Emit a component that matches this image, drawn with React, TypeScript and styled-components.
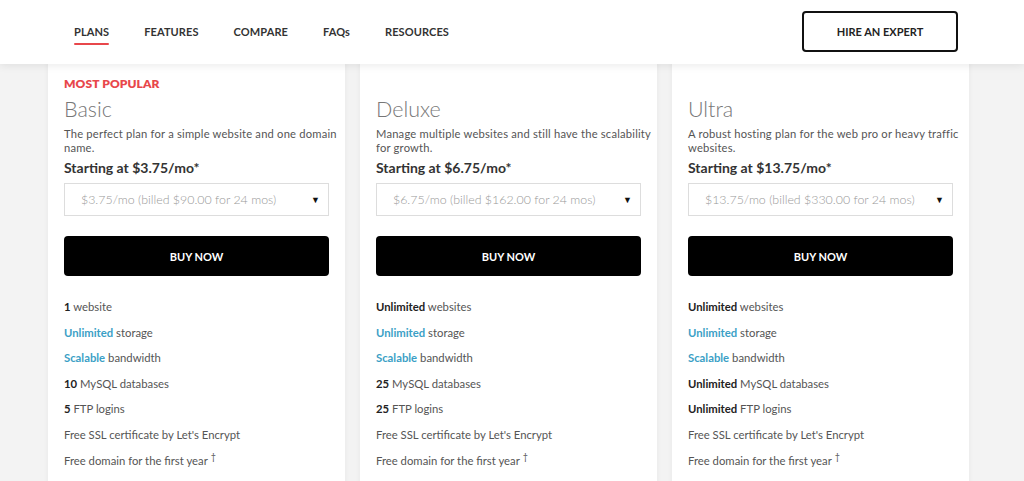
import React from 'react';
import styled, { createGlobalStyle } from 'styled-components';

const GlobalStyle = createGlobalStyle`
  html, body {
    margin: 0;
    padding: 0;
    background: #f3f3f3;
    font-family: Lato, "Open Sans", "Liberation Sans", sans-serif;
    overflow: hidden;
  }
  * { box-sizing: border-box; }
`;

const Page = styled.div`
  width: 1024px;
  height: 481px;
  overflow: hidden;
  position: relative;
`;

const Header = styled.header`
  position: relative;
  z-index: 2;
  height: 64px;
  background: #fff;
  box-shadow: 0 2px 8px rgba(0, 0, 0, 0.08);
  display: flex;
  align-items: center;
  padding: 0 66px 0 74px;
`;

const Nav = styled.nav`
  display: flex;
  gap: 35px;
  flex: 1;
`;

const NavLink = styled.a<{ $active?: boolean }>`
  position: relative;
  font-size: 11px;
  font-weight: 700;
  color: #333;
  text-decoration: none;
  letter-spacing: 0.1px;
  line-height: 16px;

  &::after {
    content: '';
    display: ${p => (p.$active ? 'block' : 'none')};
    position: absolute;
    left: 0;
    right: 0;
    bottom: -5px;
    height: 2px;
    border-radius: 1px;
    background: #e8474b;
  }
`;

const HireButton = styled.button`
  width: 156px;
  height: 41px;
  margin-top: -1px;
  border: 2px solid #111;
  border-radius: 4px;
  background: #fff;
  font-family: inherit;
  font-size: 11px;
  font-weight: 700;
  color: #222;
  cursor: pointer;
`;

const Cards = styled.div`
  position: relative;
  z-index: 1;
  display: flex;
  gap: 15px;
  padding-left: 48px;
  margin-top: -4px;
`;

const Card = styled.section`
  width: 297px;
  height: 440px;
  background: #fff;
  box-shadow: 0 0 6px rgba(0, 0, 0, 0.05);
  padding: 17px 16px 0;
`;

const Popular = styled.div`
  height: 14px;
  font-size: 12px;
  font-weight: 800;
  color: #e8474b;
  line-height: 14px;
  letter-spacing: 0.1px;
`;

const Title = styled.h2`
  margin: 5px 0 0;
  font-size: 21.5px;
  font-weight: 300;
  color: #777;
  line-height: 26px;
`;

const Desc = styled.p`
  margin: 5px -14px 0 0;
  font-size: 11.2px;
  letter-spacing: 0.2px;
  color: #555;
  line-height: 14px;
  min-height: 28px;
`;

const Starting = styled.div`
  margin-top: 4px;
  font-size: 14px;
  font-weight: 700;
  color: #333;
  line-height: 18px;
`;

const Select = styled.div`
  margin-top: 6px;
  height: 33px;
  border: 1px solid #ddd;
  display: flex;
  align-items: center;
  justify-content: space-between;
  padding: 0 8px 0 16px;
  font-size: 12.4px;
  font-weight: 300;
  color: #999;
`;

const Arrow = styled.span`
  font-size: 9px;
  color: #111;
`;

const BuyButton = styled.button`
  margin-top: 20px;
  width: 100%;
  height: 40px;
  border: none;
  border-radius: 4px;
  background: #000;
  color: #fff;
  font-family: inherit;
  font-size: 11px;
  font-weight: 700;
  cursor: pointer;
`;

const Features = styled.ul`
  list-style: none;
  margin: 23px 0 0;
  padding: 0;
`;

const Feature = styled.li`
  font-size: 11.3px;
  color: #555;
  line-height: 15px;
  height: 25.6px;
`;

const Strong = styled.b<{ $blue?: boolean }>`
  font-weight: 700;
  color: ${p => (p.$blue ? '#3b9fc6' : '#222')};
`;

const Dagger = styled.sup`
  font-size: 9px;
  line-height: 0;
  margin-left: 3px;
`;

type FeatureItem = { strong?: string; blue?: boolean; text: string; dagger?: boolean };

const plans: {
  name: string;
  popular?: boolean;
  desc: string;
  price: string;
  option: string;
  features: FeatureItem[];
}[] = [
  {
    name: 'Basic',
    popular: true,
    desc: 'The perfect plan for a simple website and one domain name.',
    price: '$3.75',
    option: '$3.75/mo (billed $90.00 for 24 mos)',
    features: [
      { strong: '1', text: 'website' },
      { strong: 'Unlimited', blue: true, text: 'storage' },
      { strong: 'Scalable', blue: true, text: 'bandwidth' },
      { strong: '10', text: 'MySQL databases' },
      { strong: '5', text: 'FTP logins' },
      { text: "Free SSL certificate by Let's Encrypt" },
      { text: 'Free domain for the first year', dagger: true },
    ],
  },
  {
    name: 'Deluxe',
    desc: 'Manage multiple websites and still have the scalability for growth.',
    price: '$6.75',
    option: '$6.75/mo (billed $162.00 for 24 mos)',
    features: [
      { strong: 'Unlimited', text: 'websites' },
      { strong: 'Unlimited', blue: true, text: 'storage' },
      { strong: 'Scalable', blue: true, text: 'bandwidth' },
      { strong: '25', text: 'MySQL databases' },
      { strong: '25', text: 'FTP logins' },
      { text: "Free SSL certificate by Let's Encrypt" },
      { text: 'Free domain for the first year', dagger: true },
    ],
  },
  {
    name: 'Ultra',
    desc: 'A robust hosting plan for the web pro or heavy traffic websites.',
    price: '$13.75',
    option: '$13.75/mo (billed $330.00 for 24 mos)',
    features: [
      { strong: 'Unlimited', text: 'websites' },
      { strong: 'Unlimited', blue: true, text: 'storage' },
      { strong: 'Scalable', blue: true, text: 'bandwidth' },
      { strong: 'Unlimited', text: 'MySQL databases' },
      { strong: 'Unlimited', text: 'FTP logins' },
      { text: "Free SSL certificate by Let's Encrypt" },
      { text: 'Free domain for the first year', dagger: true },
    ],
  },
];

const navItems = ['PLANS', 'FEATURES', 'COMPARE', 'FAQs', 'RESOURCES'];

export default function App() {
  return (
    <Page>
      <GlobalStyle />
      <Header>
        <Nav>
          {navItems.map((item, i) => (
            <NavLink key={item} href="#" $active={i === 0}>
              {item}
            </NavLink>
          ))}
        </Nav>
        <HireButton>HIRE AN EXPERT</HireButton>
      </Header>
      <Cards>
        {plans.map(plan => (
          <Card key={plan.name}>
            <Popular>{plan.popular ? 'MOST POPULAR' : ''}</Popular>
            <Title>{plan.name}</Title>
            <Desc>{plan.desc}</Desc>
            <Starting>Starting at {plan.price}/mo*</Starting>
            <Select>
              <span>{plan.option}</span>
              <Arrow>▼</Arrow>
            </Select>
            <BuyButton>BUY NOW</BuyButton>
            <Features>
              {plan.features.map((f, i) => (
                <Feature key={i}>
                  {f.strong && <Strong $blue={f.blue}>{f.strong}</Strong>}
                  {f.strong ? ' ' : ''}
                  {f.text}
                  {f.dagger && <Dagger>†</Dagger>}
                </Feature>
              ))}
            </Features>
          </Card>
        ))}
      </Cards>
    </Page>
  );
}
